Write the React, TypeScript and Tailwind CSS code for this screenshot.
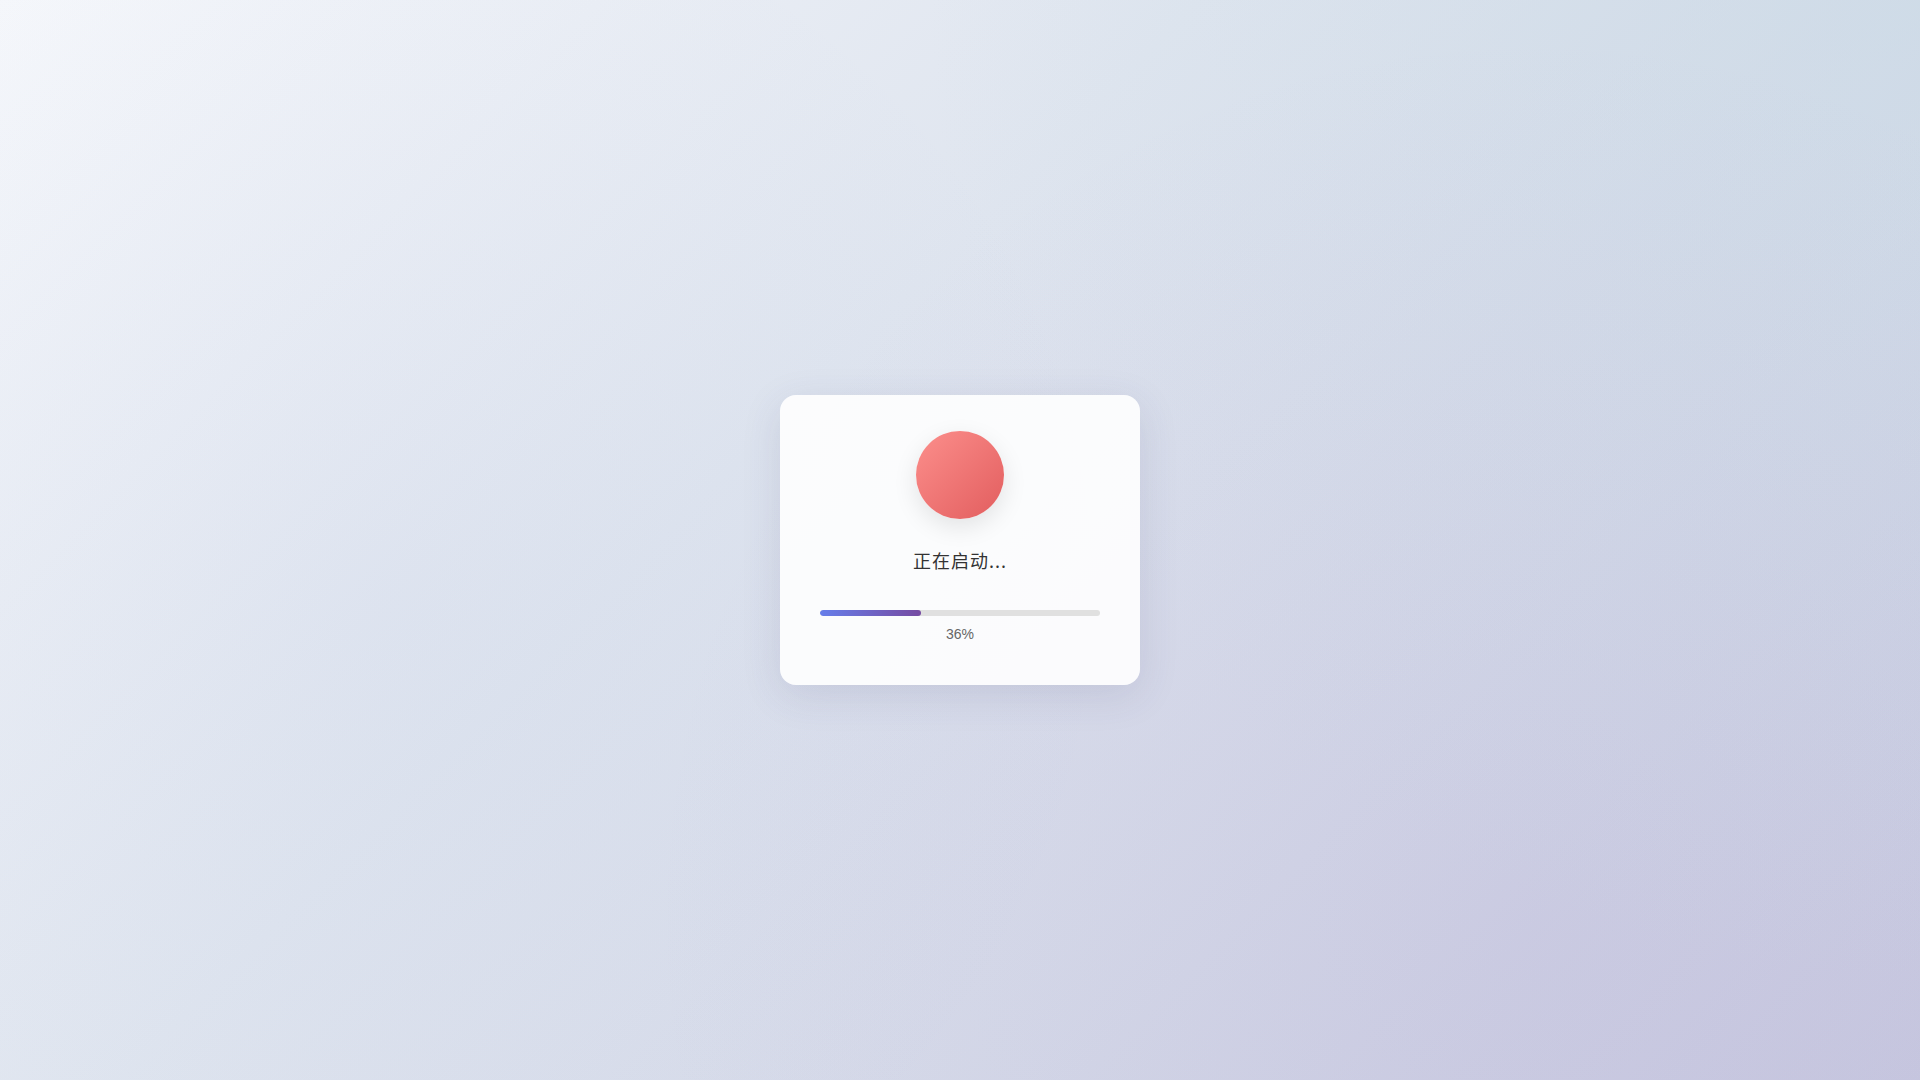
import React from "react";

const progress = 36;

export default function App() {
  return (
    <div className="relative flex h-screen w-full items-center justify-center overflow-hidden bg-[linear-gradient(135deg,#f5f7fb_0%,#dfe5ef_40%,#d3d7e7_72%,#c8c9e0_100%)] font-['Liberation_Sans','Noto_Sans_CJK_SC',sans-serif]">
      <div className="pointer-events-none absolute inset-0 bg-[radial-gradient(circle_at_80%_85%,rgba(140,110,190,0.08),transparent_50%),radial-gradient(circle_at_20%_55%,rgba(110,130,200,0.05),transparent_45%),radial-gradient(circle_at_100%_0%,rgba(200,220,230,0.5),transparent_45%)]" />
      <div className="relative flex w-[360px] flex-col items-center rounded-2xl bg-white/90 px-10 pt-9 pb-[41px] shadow-[0_10px_40px_rgba(60,60,110,0.12)]">
        <div className="h-[88px] w-[88px] rounded-full bg-[linear-gradient(135deg,#fc8f8c_0%,#e25d5e_100%)] shadow-[0_8px_24px_rgba(0,0,0,0.1)]" />
        <div className="mt-[28px] text-[18px] leading-[27px] tracking-[1px] text-[#333] font-['Noto_Sans_CJK_SC',sans-serif]">
          正在启动...
        </div>
        <div className="mt-[36px] h-1.5 w-full overflow-hidden rounded-full bg-[#e0e0e0]">
          <div
            className="h-full rounded-full bg-[linear-gradient(90deg,#667eea,#764ba2)]"
            style={{ width: `${progress}%` }}
          />
        </div>
        <div className="mt-2 text-[14px] leading-5 text-[#666]">{progress}%</div>
      </div>
    </div>
  );
}
